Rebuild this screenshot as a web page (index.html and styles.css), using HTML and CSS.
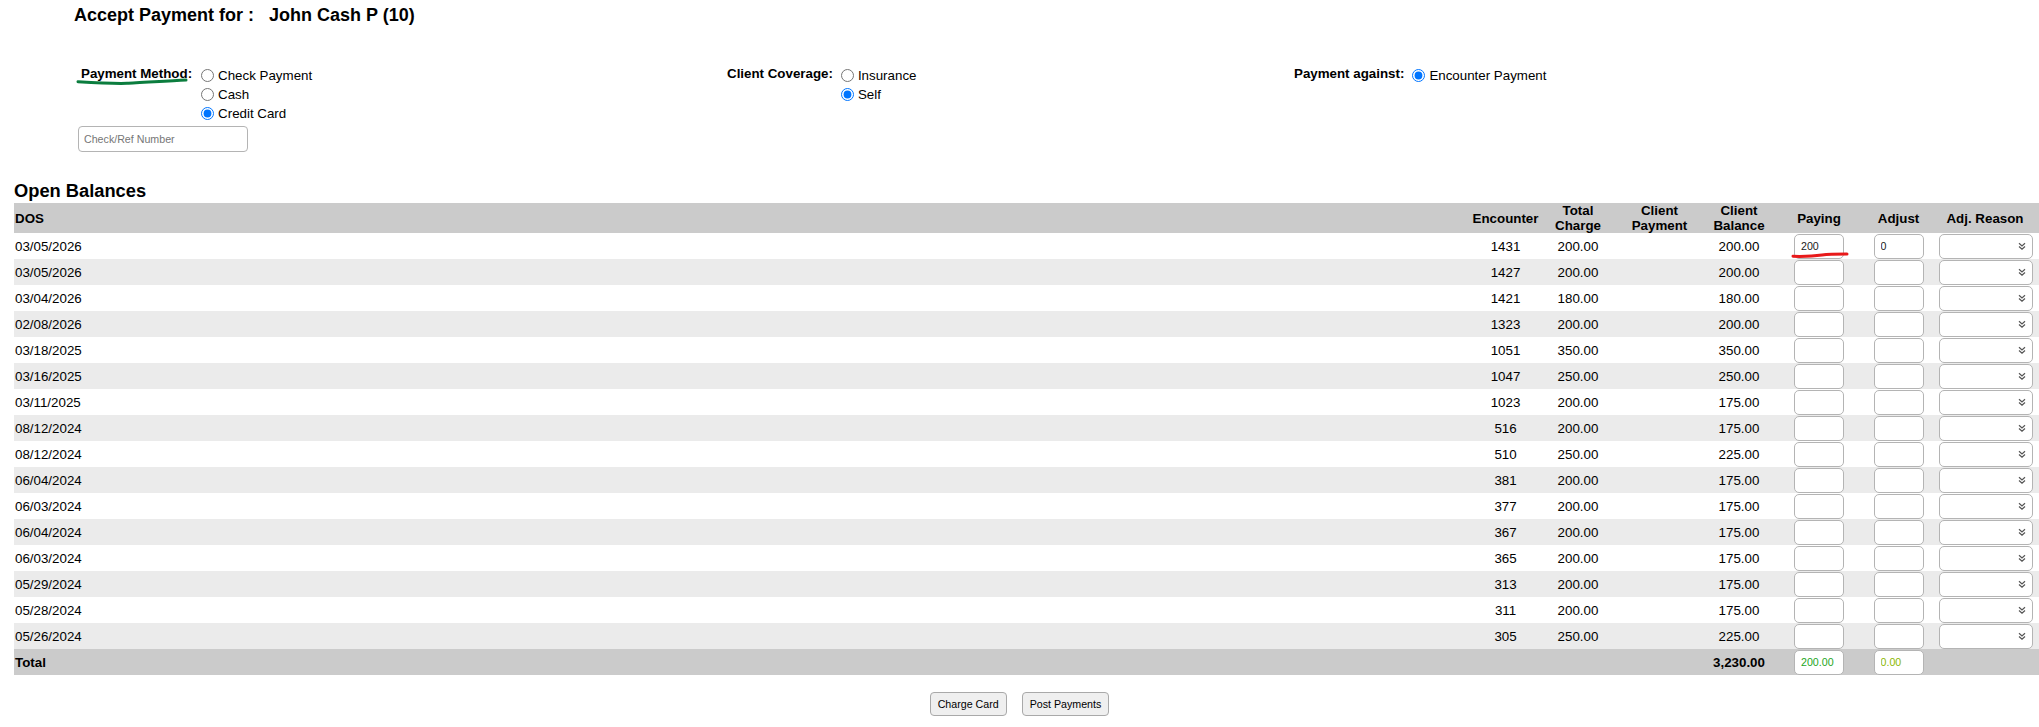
FILE: index.html
```html
<!DOCTYPE html>
<html>
<head>
<meta charset="utf-8">
<title>Accept Payment</title>
<link rel="stylesheet" href="styles.css">
</head>
<body>
<div class="title">Accept Payment for :&nbsp;&nbsp; John Cash P (10)</div>

<div class="options">
  <div class="group group-method">
    <div class="group-row">
      <div class="opt-label method-label">Payment Method:
        <svg class="green-mark" width="114" height="8" viewBox="0 0 114 8"><path d="M2 3.7 C 20 4.8, 40 5.6, 51 5.3 C 60 5, 90 3, 110 2" fill="none" stroke="#0b7d3e" stroke-width="3" stroke-linecap="round"/></svg>
      </div>
      <div class="radios">
        <label class="radio-row"><input type="radio" name="pm"><span>Check Payment</span></label>
        <label class="radio-row"><input type="radio" name="pm"><span>Cash</span></label>
        <label class="radio-row"><input type="radio" name="pm" checked><span>Credit Card</span></label>
      </div>
    </div>
    <input class="ref-input" type="text" placeholder="Check/Ref Number">
  </div>
  <div class="group group-coverage">
    <div class="group-row">
      <div class="opt-label">Client Coverage:</div>
      <div class="radios">
        <label class="radio-row"><input type="radio" name="cc"><span>Insurance</span></label>
        <label class="radio-row"><input type="radio" name="cc" checked><span>Self</span></label>
      </div>
    </div>
  </div>
  <div class="group group-against">
    <div class="group-row">
      <div class="opt-label">Payment against:</div>
      <div class="radios">
        <label class="radio-row"><input type="radio" name="pa" checked><span>Encounter Payment</span></label>
      </div>
    </div>
  </div>
</div>

<div class="section-title">Open Balances</div>

<table class="balances">
  <colgroup>
    <col class="c-dos"><col class="c-enc"><col class="c-tc"><col class="c-cp"><col class="c-cb"><col class="c-pay"><col class="c-adj"><col class="c-ar">
  </colgroup>
  <thead>
    <tr>
      <th class="left">DOS</th>
      <th>Encounter</th>
      <th>Total<br>Charge</th>
      <th>Client<br>Payment</th>
      <th>Client<br>Balance</th>
      <th>Paying</th>
      <th>Adjust</th>
      <th>Adj. Reason</th>
    </tr>
  </thead>
  <tbody>
    <tr>
      <td class="left">03/05/2026</td><td>1431</td><td>200.00</td><td></td><td>200.00</td>
      <td class="mark-cell"><input class="cell-input" type="text" value="200"><svg class="red-mark" width="60" height="9" viewBox="0 0 60 9"><path d="M3 6.3 C 15 6.6, 25 6, 32 5 S 48 4, 57 4" fill="none" stroke="#e8191a" stroke-width="3" stroke-linecap="round"/></svg></td>
      <td><input class="cell-input" type="text" value="0"></td>
      <td class="right"><div class="select"><svg width="8" height="8" viewBox="0 0 8 8"><path d="M1 1.3 L4 4 L7 1.3 M1 4.5 L4 7.2 L7 4.5" fill="none" stroke="#555" stroke-width="1.2"/></svg></div></td>
    </tr>
    <tr>
      <td class="left">03/05/2026</td><td>1427</td><td>200.00</td><td></td><td>200.00</td>
      <td><input class="cell-input" type="text"></td><td><input class="cell-input" type="text"></td>
      <td class="right"><div class="select"><svg width="8" height="8" viewBox="0 0 8 8"><path d="M1 1.3 L4 4 L7 1.3 M1 4.5 L4 7.2 L7 4.5" fill="none" stroke="#555" stroke-width="1.2"/></svg></div></td>
    </tr>
    <tr>
      <td class="left">03/04/2026</td><td>1421</td><td>180.00</td><td></td><td>180.00</td>
      <td><input class="cell-input" type="text"></td><td><input class="cell-input" type="text"></td>
      <td class="right"><div class="select"><svg width="8" height="8" viewBox="0 0 8 8"><path d="M1 1.3 L4 4 L7 1.3 M1 4.5 L4 7.2 L7 4.5" fill="none" stroke="#555" stroke-width="1.2"/></svg></div></td>
    </tr>
    <tr>
      <td class="left">02/08/2026</td><td>1323</td><td>200.00</td><td></td><td>200.00</td>
      <td><input class="cell-input" type="text"></td><td><input class="cell-input" type="text"></td>
      <td class="right"><div class="select"><svg width="8" height="8" viewBox="0 0 8 8"><path d="M1 1.3 L4 4 L7 1.3 M1 4.5 L4 7.2 L7 4.5" fill="none" stroke="#555" stroke-width="1.2"/></svg></div></td>
    </tr>
    <tr>
      <td class="left">03/18/2025</td><td>1051</td><td>350.00</td><td></td><td>350.00</td>
      <td><input class="cell-input" type="text"></td><td><input class="cell-input" type="text"></td>
      <td class="right"><div class="select"><svg width="8" height="8" viewBox="0 0 8 8"><path d="M1 1.3 L4 4 L7 1.3 M1 4.5 L4 7.2 L7 4.5" fill="none" stroke="#555" stroke-width="1.2"/></svg></div></td>
    </tr>
    <tr>
      <td class="left">03/16/2025</td><td>1047</td><td>250.00</td><td></td><td>250.00</td>
      <td><input class="cell-input" type="text"></td><td><input class="cell-input" type="text"></td>
      <td class="right"><div class="select"><svg width="8" height="8" viewBox="0 0 8 8"><path d="M1 1.3 L4 4 L7 1.3 M1 4.5 L4 7.2 L7 4.5" fill="none" stroke="#555" stroke-width="1.2"/></svg></div></td>
    </tr>
    <tr>
      <td class="left">03/11/2025</td><td>1023</td><td>200.00</td><td></td><td>175.00</td>
      <td><input class="cell-input" type="text"></td><td><input class="cell-input" type="text"></td>
      <td class="right"><div class="select"><svg width="8" height="8" viewBox="0 0 8 8"><path d="M1 1.3 L4 4 L7 1.3 M1 4.5 L4 7.2 L7 4.5" fill="none" stroke="#555" stroke-width="1.2"/></svg></div></td>
    </tr>
    <tr>
      <td class="left">08/12/2024</td><td>516</td><td>200.00</td><td></td><td>175.00</td>
      <td><input class="cell-input" type="text"></td><td><input class="cell-input" type="text"></td>
      <td class="right"><div class="select"><svg width="8" height="8" viewBox="0 0 8 8"><path d="M1 1.3 L4 4 L7 1.3 M1 4.5 L4 7.2 L7 4.5" fill="none" stroke="#555" stroke-width="1.2"/></svg></div></td>
    </tr>
    <tr>
      <td class="left">08/12/2024</td><td>510</td><td>250.00</td><td></td><td>225.00</td>
      <td><input class="cell-input" type="text"></td><td><input class="cell-input" type="text"></td>
      <td class="right"><div class="select"><svg width="8" height="8" viewBox="0 0 8 8"><path d="M1 1.3 L4 4 L7 1.3 M1 4.5 L4 7.2 L7 4.5" fill="none" stroke="#555" stroke-width="1.2"/></svg></div></td>
    </tr>
    <tr>
      <td class="left">06/04/2024</td><td>381</td><td>200.00</td><td></td><td>175.00</td>
      <td><input class="cell-input" type="text"></td><td><input class="cell-input" type="text"></td>
      <td class="right"><div class="select"><svg width="8" height="8" viewBox="0 0 8 8"><path d="M1 1.3 L4 4 L7 1.3 M1 4.5 L4 7.2 L7 4.5" fill="none" stroke="#555" stroke-width="1.2"/></svg></div></td>
    </tr>
    <tr>
      <td class="left">06/03/2024</td><td>377</td><td>200.00</td><td></td><td>175.00</td>
      <td><input class="cell-input" type="text"></td><td><input class="cell-input" type="text"></td>
      <td class="right"><div class="select"><svg width="8" height="8" viewBox="0 0 8 8"><path d="M1 1.3 L4 4 L7 1.3 M1 4.5 L4 7.2 L7 4.5" fill="none" stroke="#555" stroke-width="1.2"/></svg></div></td>
    </tr>
    <tr>
      <td class="left">06/04/2024</td><td>367</td><td>200.00</td><td></td><td>175.00</td>
      <td><input class="cell-input" type="text"></td><td><input class="cell-input" type="text"></td>
      <td class="right"><div class="select"><svg width="8" height="8" viewBox="0 0 8 8"><path d="M1 1.3 L4 4 L7 1.3 M1 4.5 L4 7.2 L7 4.5" fill="none" stroke="#555" stroke-width="1.2"/></svg></div></td>
    </tr>
    <tr>
      <td class="left">06/03/2024</td><td>365</td><td>200.00</td><td></td><td>175.00</td>
      <td><input class="cell-input" type="text"></td><td><input class="cell-input" type="text"></td>
      <td class="right"><div class="select"><svg width="8" height="8" viewBox="0 0 8 8"><path d="M1 1.3 L4 4 L7 1.3 M1 4.5 L4 7.2 L7 4.5" fill="none" stroke="#555" stroke-width="1.2"/></svg></div></td>
    </tr>
    <tr>
      <td class="left">05/29/2024</td><td>313</td><td>200.00</td><td></td><td>175.00</td>
      <td><input class="cell-input" type="text"></td><td><input class="cell-input" type="text"></td>
      <td class="right"><div class="select"><svg width="8" height="8" viewBox="0 0 8 8"><path d="M1 1.3 L4 4 L7 1.3 M1 4.5 L4 7.2 L7 4.5" fill="none" stroke="#555" stroke-width="1.2"/></svg></div></td>
    </tr>
    <tr>
      <td class="left">05/28/2024</td><td>311</td><td>200.00</td><td></td><td>175.00</td>
      <td><input class="cell-input" type="text"></td><td><input class="cell-input" type="text"></td>
      <td class="right"><div class="select"><svg width="8" height="8" viewBox="0 0 8 8"><path d="M1 1.3 L4 4 L7 1.3 M1 4.5 L4 7.2 L7 4.5" fill="none" stroke="#555" stroke-width="1.2"/></svg></div></td>
    </tr>
    <tr>
      <td class="left">05/26/2024</td><td>305</td><td>250.00</td><td></td><td>225.00</td>
      <td><input class="cell-input" type="text"></td><td><input class="cell-input" type="text"></td>
      <td class="right"><div class="select"><svg width="8" height="8" viewBox="0 0 8 8"><path d="M1 1.3 L4 4 L7 1.3 M1 4.5 L4 7.2 L7 4.5" fill="none" stroke="#555" stroke-width="1.2"/></svg></div></td>
    </tr>
  </tbody>
  <tfoot>
    <tr>
      <td class="left bold">Total</td><td></td><td></td><td></td><td class="bold">3,230.00</td>
      <td><input class="cell-input total-pay" type="text" value="200.00"></td>
      <td><input class="cell-input total-adj" type="text" value="0.00"></td>
      <td></td>
    </tr>
  </tfoot>
</table>

<div class="actions">
  <button class="btn" type="button">Charge Card</button>
  <button class="btn" type="button">Post Payments</button>
</div>
</body>
</html>
```

FILE: styles.css
```css
html, body {
  margin: 0;
  padding: 0;
  background: #ffffff;
}

body {
  font-family: "Liberation Sans", Arial, sans-serif;
  font-size: 13.33px;
  color: #000;
  overflow: hidden;
}

.title {
  margin: 5px 0 0 74px;
  font-size: 18px;
  line-height: 21px;
  font-weight: bold;
}

.options {
  display: flex;
  margin-top: 40px;
  padding-left: 78px;
}

.group-method { width: 649px; }
.group-coverage { width: 567px; }

.group-row {
  display: flex;
  align-items: flex-start;
}

.opt-label {
  font-weight: bold;
  line-height: 15px;
  margin-right: 8px;
}

.method-label {
  position: relative;
  margin-left: 3px;
  margin-right: 9px;
}

.green-mark {
  position: absolute;
  left: -5px;
  top: 12px;
}

.radios {
  display: flex;
  flex-direction: column;
}

.radio-row {
  display: flex;
  align-items: center;
  height: 19px;
  line-height: 15px;
}

.radio-row input {
  width: 13px;
  height: 13px;
  margin: 0 4px 0 0;
}

.ref-input {
  display: block;
  box-sizing: border-box;
  width: 170px;
  height: 26px;
  margin-top: 3px;
  padding: 0 5px;
  border: 1px solid #b4b4b4;
  border-radius: 4px;
  font-family: "Liberation Sans", Arial, sans-serif;
  font-size: 10.67px;
  background: #fff;
}

.ref-input::placeholder {
  color: #767676;
}

.section-title {
  margin: 28px 0 2px 14px;
  font-size: 18.3px;
  line-height: 21px;
  font-weight: bold;
}

.balances {
  width: calc(100% - 14px);
  margin-left: 14px;
  border-collapse: collapse;
  table-layout: fixed;
}

.c-enc { width: 75px; }
.c-tc { width: 70px; }
.c-cp { width: 93px; }
.c-cb { width: 66px; }
.c-pay { width: 94px; }
.c-adj { width: 65px; }
.c-ar { width: 108px; }

.balances th {
  height: 30px;
  padding: 0 1px;
  background: #cbcbcb;
  font-weight: bold;
  line-height: 15px;
  text-align: center;
  vertical-align: middle;
}

.balances td {
  height: 26px;
  padding: 0 1px;
  text-align: center;
  vertical-align: middle;
  line-height: 15px;
}

.balances .left { text-align: left; }
.balances .right { text-align: right; }
.balances .bold { font-weight: bold; }

.balances tbody tr:nth-child(odd) td { background: #ffffff; }
.balances tbody tr:nth-child(even) td { background: #ebebeb; }
.balances tfoot td { background: #cbcbcb; }

.cell-input {
  display: block;
  box-sizing: border-box;
  width: 50px;
  height: 25px;
  margin: 0 auto;
  padding: 0 6px;
  border: 1px solid #b4b4b4;
  border-radius: 5px;
  background: #fff;
  font-family: "Liberation Sans", Arial, sans-serif;
  font-size: 10.67px;
  color: #1a1a1a;
}

.total-pay { color: #1ca61c; }
.total-adj { color: #8cb800; }

.mark-cell { position: relative; }

.red-mark {
  position: absolute;
  left: 18px;
  top: 17px;
  z-index: 2;
}

.select {
  display: flex;
  align-items: center;
  justify-content: flex-end;
  box-sizing: border-box;
  width: 94px;
  height: 25px;
  margin: 0 5px 0 auto;
  padding-right: 6px;
  border: 1px solid #b4b4b4;
  border-radius: 5px;
  background: #fff;
}

.actions {
  display: flex;
  justify-content: center;
  gap: 15px;
  margin-top: 17px;
}

.btn {
  box-sizing: border-box;
  height: 24px;
  padding: 0 7px;
  border: 1px solid #a9a9a9;
  border-radius: 4px;
  background: #efefef;
  font-family: "Liberation Sans", Arial, sans-serif;
  font-size: 10.67px;
  color: #000;
}
```
